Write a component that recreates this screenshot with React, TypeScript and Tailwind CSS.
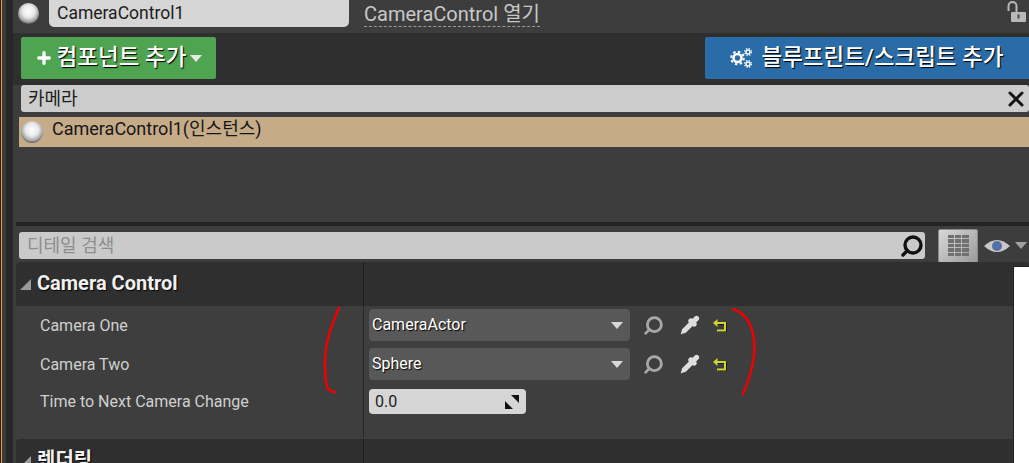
import { Search, Pipette, X, Plus } from 'lucide-react';

const font = { fontFamily: 'Roboto, "Noto Sans CJK KR", sans-serif' };

function Ball({ size }: { size: number }) {
    return (
        <div
            className="rounded-full bg-[radial-gradient(circle_at_50%_40%,#ffffff_0%,#e8e8e8_38%,#a0a0a0_64%,#262626_88%)] shrink-0"
            style={{ width: size, height: size }}
        />
    );
}

function Caret({ className }: { className: string }) {
    return (
        <svg width="12" height="7" viewBox="0 0 12 7" className={className}>
            <path d="M0 0h12L6 7z" fill="currentColor" />
        </svg>
    );
}

function Gears() {
    return (
        <svg width="22" height="22" viewBox="0 0 22 22" fill="none" stroke="#fff">
            <circle cx="7.5" cy="11" r="4" strokeWidth="2.6" />
            <circle cx="7.5" cy="11" r="6.3" strokeWidth="2" strokeDasharray="2.4 2.5" />
            <circle cx="18" cy="5" r="2" strokeWidth="1.4" />
            <circle cx="18" cy="5" r="3.4" strokeWidth="1.2" strokeDasharray="1.4 1.3" />
            <circle cx="18" cy="17" r="2" strokeWidth="1.4" />
            <circle cx="18" cy="17" r="3.4" strokeWidth="1.2" strokeDasharray="1.4 1.3" />
        </svg>
    );
}

function ResetArrow() {
    return (
        <svg width="14" height="13" viewBox="0 0 14 13" className="ml-[13px]">
            <path d="M3 4h9v7.5H4" fill="none" stroke="#111" strokeWidth="2" transform="translate(0.8 0.8)" />
            <path d="M3 4h9v7.5H4" fill="none" stroke="#d4d42c" strokeWidth="2" />
            <path d="M4.5 0v8L0 4z" fill="#d4d42c" />
        </svg>
    );
}

function AssetRow({ label }: { label: string }) {
    return (
        <div className="flex items-start pt-[3px] h-[39px]">
            <div className="w-[261px] h-[32px] rounded-[4px] bg-[#585858] flex items-center justify-between pl-[3px] pr-[7px]">
                <span className="text-[16px] text-white [text-shadow:1px_1px_1px_#000]">{label}</span>
                <Caret className="text-[#d8d8d8]" />
            </div>
            <div className="h-[32px] flex items-center">
                <Search size={21} strokeWidth={3.2} className="ml-[13px] text-[#a8a8a8] -scale-x-100" />
                <Pipette size={20} strokeWidth={2} className="ml-[16px] text-[#dedede] fill-[#dedede]" />
                <ResetArrow />
            </div>
        </div>
    );
}

function SectionHeader({ label }: { label: string }) {
    return (
        <div className="flex bg-[#2f2f2f] rounded-t-[4px] h-[44px] shrink-0">
            <div className="w-[348px] border-r border-[#1e1e1e] flex items-center pl-[4px]">
                <svg width="11" height="11" viewBox="0 0 11 11" className="mr-[6px]">
                    <path d="M11 0v11H0z" fill="#9a9a9a" />
                </svg>
                <span className="text-[20px] font-bold text-[#f0f0f0] -mt-[2px] [text-shadow:1px_1px_1px_#000]">{label}</span>
            </div>
        </div>
    );
}

export default function App() {
    return (
        <div className="w-[1029px] h-[463px] overflow-hidden flex relative bg-[#3d3d3d]" style={font}>
            {/* Viewport edge */}
            <div className="w-[13px] h-full shrink-0 flex bg-[#272727]">
                <div className="w-[1px] h-full bg-[#1c1c1c]" />
                <div className="w-[1px] h-full bg-[#e8a010]" />
                <div className="w-[4px] h-full bg-[#3a3a3a]" />
            </div>

            <div className="flex-1 min-w-0 flex flex-col">
                {/* Actor name */}
                <div className="h-[33px] flex items-start shrink-0 pl-[3px] pr-[3px]">
                    <div className="mt-[3px] ml-[2px]"><Ball size={21} /></div>
                    <div className="ml-[10px] w-[300px] h-[27px] bg-[#d6d6d6] rounded-b-[5px] flex items-center pl-[8px] text-[17.5px] text-[#1c1c1c]">
                        CameraControl1
                    </div>
                    <span className="ml-[15px] mt-[3px] text-[20px] text-[#c8c8c8] border-b border-dashed border-[#9a9a9a] leading-[23px]">
                        CameraControl 열기
                    </span>
                    <svg width="20" height="22" viewBox="0 0 20 22" className="ml-auto">
                        <path d="M2.5 11V6a4 4 0 0 1 8 0v6" fill="none" stroke="#b8b8b8" strokeWidth="2" />
                        <rect x="5" y="12" width="15" height="10" rx="1" fill="#b8b8b8" />
                        <rect x="11.5" y="14.5" width="2" height="4" fill="#444" />
                    </svg>
                </div>

                {/* Toolbar */}
                <div className="h-[52px] bg-[#2f2f2f] shrink-0 flex items-start justify-between pt-[4px] pl-[8px]">
                    <button className="w-[195px] h-[42px] bg-[#4ea450] rounded-[2px] flex items-center justify-center gap-[4px] text-[22.5px] font-medium text-white [text-shadow:1px_1px_1px_#000]">
                        <Plus size={18} strokeWidth={4.5} />
                        <span>컴포넌트 추가</span>
                        <Caret className="text-[#e8e8e8]" />
                    </button>
                    <button className="w-[324px] h-[42px] bg-[#2a6ca8] rounded-l-[2px] flex items-center justify-center gap-[9px] text-[22.5px] font-medium text-white [text-shadow:1px_1px_1px_#000]">
                        <Gears />
                        <span>블루프린트/스크립트 추가</span>
                    </button>
                </div>

                {/* Component tree */}
                <div className="h-[137px] shrink-0 flex flex-col">
                    <div className="ml-[8px] h-[27px] bg-[#cccccc] rounded-[3px] flex items-center justify-between pl-[7px] pr-[1px] text-[18px] text-[#1c1c1c] shrink-0">
                        <span>카메라</span>
                        <X size={24} strokeWidth={3} className="text-[#141414]" />
                    </div>
                    <div className="mt-[5px] ml-[6px] h-[30px] bg-[#c6ab89] flex items-center pl-[2px] shrink-0">
                        <Ball size={22} />
                        <span className="ml-[9px] text-[18px] text-[#161616] -mt-[7px]">CameraControl1(인스턴스)</span>
                    </div>
                </div>

                <div className="h-[4px] ml-[3px] bg-[#232323] shrink-0" />

                {/* Details search */}
                <div className="h-[36px] shrink-0 flex items-center pl-[6px] pt-[3px]">
                    <div className="w-[906px] h-[27px] bg-[#cacaca] rounded-[3px] flex items-center justify-between pl-[8px] pr-[1px] text-[18px] text-[#8e8e8e]">
                        <span>디테일 검색</span>
                        <Search size={24} strokeWidth={3.4} className="text-[#111] -scale-x-100" />
                    </div>
                    <div className="ml-[13px] w-[40px] h-[34px] rounded-[2px] border border-[#8a8a8a] bg-[linear-gradient(135deg,#d8d8d8,#9a9a9a)] flex items-center justify-center">
                        <div className="w-[21px] h-[21px] grid grid-cols-3 grid-rows-5 gap-[1px]">
                            {Array.from({ length: 15 }).map((_, i) => (
                                <div key={i} className="bg-[#707070]" />
                            ))}
                        </div>
                    </div>
                    <svg width="26" height="16" viewBox="0 0 26 16" className="ml-[6px]">
                        <path d="M0 8Q13-4 26 8 13 20 0 8z" fill="#c8c8c8" />
                        <circle cx="13" cy="8" r="5" fill="#5470a8" />
                    </svg>
                    <Caret className="ml-[5px] text-[#a0a0a0]" />
                </div>

                {/* Properties */}
                <div className="flex-1 min-h-0 ml-[3px] flex flex-col relative">
                    <SectionHeader label="Camera Control" />
                    <div className="h-[133px] shrink-0 flex bg-[#3e3e3e]">
                        <div className="w-[348px] border-r border-[#262626] pl-[24px] text-[16px] text-[#d0d0d0] shrink-0 h-[131px]">
                            <div className="h-[39px] flex items-center">Camera One</div>
                            <div className="h-[39px] flex items-center">Camera Two</div>
                            <div className="h-[36px] flex items-center">Time to Next Camera Change</div>
                        </div>
                        <div className="pl-[5px]">
                            <AssetRow label="CameraActor" />
                            <AssetRow label="Sphere" />
                            <div className="h-[25px] w-[157px] mt-[5px] bg-[#d6d6d6] rounded-[4px] flex items-center justify-between pl-[6px] pr-[7px] text-[16px] text-[#1c1c1c]">
                                <span>0.0</span>
                                <svg width="14" height="14" viewBox="0 0 14 14">
                                    <path d="M6 0h8v8zM0 6v8h8z" fill="#111" />
                                </svg>
                            </div>
                        </div>
                    </div>
                    <SectionHeader label="렌더링" />
                    {/* Scrollbar */}
                    <div className="absolute right-0 top-[4px] bottom-0 w-[16px] bg-white border-l border-t border-[#222] rounded-tl-[2px]" />
                </div>
            </div>

            {/* Red pen annotations */}
            <svg width="1029" height="463" viewBox="0 0 1029 463" className="absolute inset-0 pointer-events-none" fill="none" stroke="#f00000" strokeWidth="2.5" strokeLinecap="round">
                <path d="M339 308C331 326 326 340 325 358C325 374 325 390 331 391C332 392 334 392 335 392" />
                <path d="M733 309C745 313 752 322 754 340C756 360 750 378 743 394" />
            </svg>
        </div>
    );
}
